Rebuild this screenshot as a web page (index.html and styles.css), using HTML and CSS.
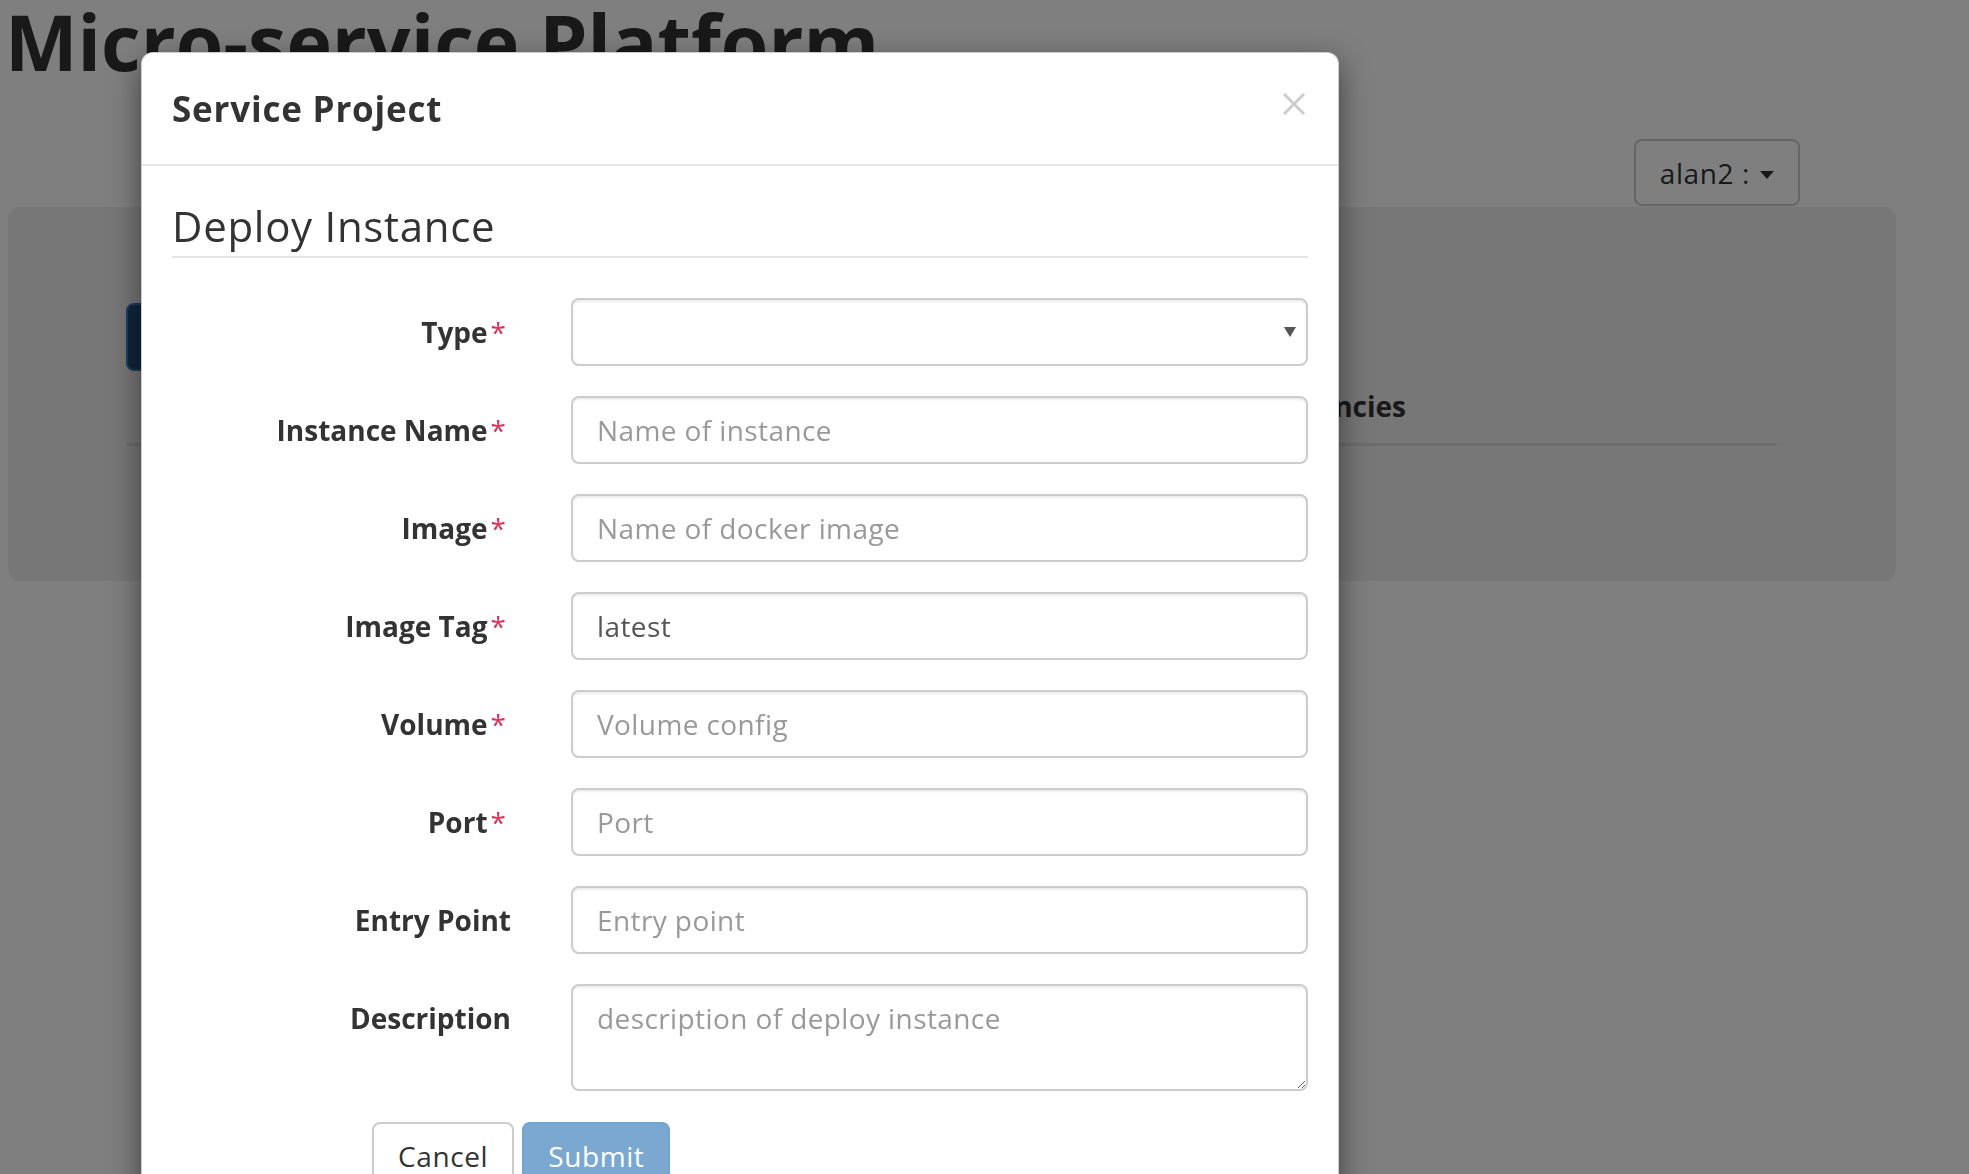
FILE: index.html
```html
<!DOCTYPE html>
<html lang="en">
<head>
<meta charset="utf-8">
<title>Micro-service Platform</title>
<link rel="stylesheet" href="styles.css">
</head>
<body>
<div class="page">
  <h1 class="brand">Micro-service Platform</h1>
  <div class="userbar">
    <button class="user-btn" type="button">alan2 : <span class="caret"></span></button>
  </div>
  <div class="panel">
    <button class="deploy-btn" type="button">Deploy Instance</button>
    <ul class="tabs">
      <li class="tab tab-first">Instances</li>
      <li class="tab">Dependencies</li>
    </ul>
  </div>
</div>

<div class="backdrop"></div>

<div class="modal">
  <div class="modal-header">
    <h4 class="modal-title">Service Project</h4>
    <span class="close" aria-label="Close">
      <svg class="close-icon" width="24" height="24" viewBox="0 0 24 24">
        <path d="M2 2 L22 22 M22 2 L2 22" stroke="#cccccc" stroke-width="3" fill="none"/>
      </svg>
    </span>
  </div>
  <div class="modal-body">
    <form class="form">
      <div class="legend">Deploy Instance</div>

      <div class="form-row">
        <label class="control-label required">Type</label>
        <div class="select-wrap">
          <select class="field select"><option></option></select>
        </div>
      </div>

      <div class="form-row">
        <label class="control-label required">Instance Name</label>
        <input class="field" type="text" placeholder="Name of instance">
      </div>

      <div class="form-row">
        <label class="control-label required">Image</label>
        <input class="field" type="text" placeholder="Name of docker image">
      </div>

      <div class="form-row">
        <label class="control-label required">Image Tag</label>
        <input class="field" type="text" value="latest">
      </div>

      <div class="form-row">
        <label class="control-label required">Volume</label>
        <input class="field" type="text" placeholder="Volume config">
      </div>

      <div class="form-row">
        <label class="control-label required">Port</label>
        <input class="field" type="text" placeholder="Port">
      </div>

      <div class="form-row">
        <label class="control-label">Entry Point</label>
        <input class="field" type="text" placeholder="Entry point">
      </div>

      <div class="form-row">
        <label class="control-label">Description</label>
        <textarea class="field textarea" placeholder="description of deploy instance"></textarea>
      </div>

      <div class="actions">
        <button class="btn btn-default" type="button">Cancel</button>
        <button class="btn btn-primary" type="button" disabled>Submit</button>
      </div>
    </form>
  </div>
</div>
</body>
</html>
```

FILE: styles.css
```css
* {
  box-sizing: border-box;
}

html, body {
  margin: 0;
  height: 1174px;
  overflow: hidden;
}

body {
  background: #fff;
  color: #333;
  font-family: "Open Sans", "Noto Sans", sans-serif;
  font-size: 28px;
  line-height: 40px;
  letter-spacing: 0.4px;
}

/* ---------- background page ---------- */
.brand {
  margin: 0;
  padding-left: 5px;
  font-size: 77px;
  line-height: 84px;
  height: 84px;
  font-weight: 700;
  letter-spacing: 0;
  color: #333;
  white-space: nowrap;
}

.userbar {
  display: flex;
  justify-content: flex-end;
  margin-top: 55px;
  padding-right: 169px;
}

.user-btn {
  height: 67px;
  padding: 12px 24px;
  border: 2px solid #ccc;
  border-radius: 8px;
  background: #fff;
  color: #333;
  font-family: inherit;
  font-size: 28px;
  line-height: 40px;
  letter-spacing: 0.6px;
  display: flex;
  align-items: center;
  gap: 10px;
}

.caret {
  display: inline-block;
  width: 0;
  height: 0;
  border-top: 8px solid #333;
  border-left: 7px solid transparent;
  border-right: 7px solid transparent;
  margin-top: 4px;
}

.panel {
  margin: 1px 73px 0 8px;
  background: #eee;
  border-radius: 12px;
  padding: 96px 119px 135px 118px;
}

.deploy-btn {
  display: block;
  height: 68px;
  width: 320px;
  border: 2px solid #3c78c0;
  border-radius: 8px;
  background: #204d74;
  color: #fff;
  font-family: inherit;
  font-size: 28px;
}

.tabs {
  list-style: none;
  margin: 0;
  padding: 0;
  display: flex;
  border-bottom: 3px solid #ddd;
}

.tab {
  padding: 15px 0 17px;
  font-weight: 700;
  letter-spacing: 0;
  color: #333;
  white-space: nowrap;
}

.tab-first {
  width: 1084px;
  padding-left: 30px;
}

/* ---------- overlay ---------- */
.backdrop {
  position: fixed;
  inset: 0;
  background: rgba(0, 0, 0, 0.5);
  z-index: 10;
}

.modal {
  position: absolute;
  left: 141px;
  top: 52px;
  width: 1198px;
  z-index: 20;
  background: #fff;
  border: 1px solid rgba(0, 0, 0, 0.2);
  border-radius: 12px;
  box-shadow: 0 10px 30px rgba(0, 0, 0, 0.5);
}

.modal-header {
  display: flex;
  justify-content: space-between;
  align-items: flex-start;
  padding: 30px;
  border-bottom: 2px solid #e5e5e5;
}

.modal-title {
  margin: 0;
  font-size: 35px;
  line-height: 51px;
  font-weight: 700;
  letter-spacing: 0.8px;
  color: #333;
}

.close {
  display: block;
  width: 24px;
  height: 24px;
  margin-top: 9px;
  margin-right: 2px;
}

.close-icon {
  display: block;
}

.modal-body {
  padding: 30px;
}

.legend {
  font-size: 42px;
  line-height: 60px;
  font-weight: 400;
  letter-spacing: 0.7px;
  color: #333;
  border-bottom: 2px solid #e5e5e5;
  margin-bottom: 40px;
}

.form-row {
  display: grid;
  grid-template-columns: 339px 1fr;
  column-gap: 60px;
  margin-bottom: 30px;
}

.control-label {
  text-align: right;
  font-weight: 700;
  letter-spacing: 0;
  padding-top: 14px;
  line-height: 40px;
  white-space: nowrap;
}

.required::after {
  content: "*";
  color: #dc3258;
  font-weight: 400;
  margin-left: 3px;
  margin-right: 5px;
}

.field {
  display: block;
  width: 100%;
  height: 68px;
  padding: 12px 24px;
  border: 2px solid #ccc;
  border-radius: 8px;
  background: #fff;
  color: #555;
  font-family: inherit;
  font-size: 28px;
  line-height: 40px;
  letter-spacing: 0.4px;
  box-shadow: inset 0 2px 2px rgba(0, 0, 0, 0.075);
  outline: none;
}

.field::placeholder {
  color: #999;
  opacity: 1;
}

.select-wrap {
  position: relative;
}

.select {
  appearance: none;
  -webkit-appearance: none;
}

.select-wrap::after {
  content: "";
  position: absolute;
  right: 12px;
  top: 29px;
  width: 0;
  height: 0;
  border-top: 10px solid #555;
  border-left: 6px solid transparent;
  border-right: 6px solid transparent;
  pointer-events: none;
}

.textarea {
  height: 107px;
  resize: vertical;
}

.actions {
  display: flex;
  gap: 8px;
  margin-left: 200px;
  padding-top: 1px;
}

.btn {
  height: 68px;
  padding: 12px 24px;
  border: 2px solid #ccc;
  border-radius: 8px;
  font-family: inherit;
  font-size: 28px;
  line-height: 40px;
  letter-spacing: 0.6px;
}

.btn-default {
  background: #fff;
  color: #333;
}

.btn-primary {
  background: #7aa8d0;
  border-color: #76a3cb;
  color: #fff;
}
```
